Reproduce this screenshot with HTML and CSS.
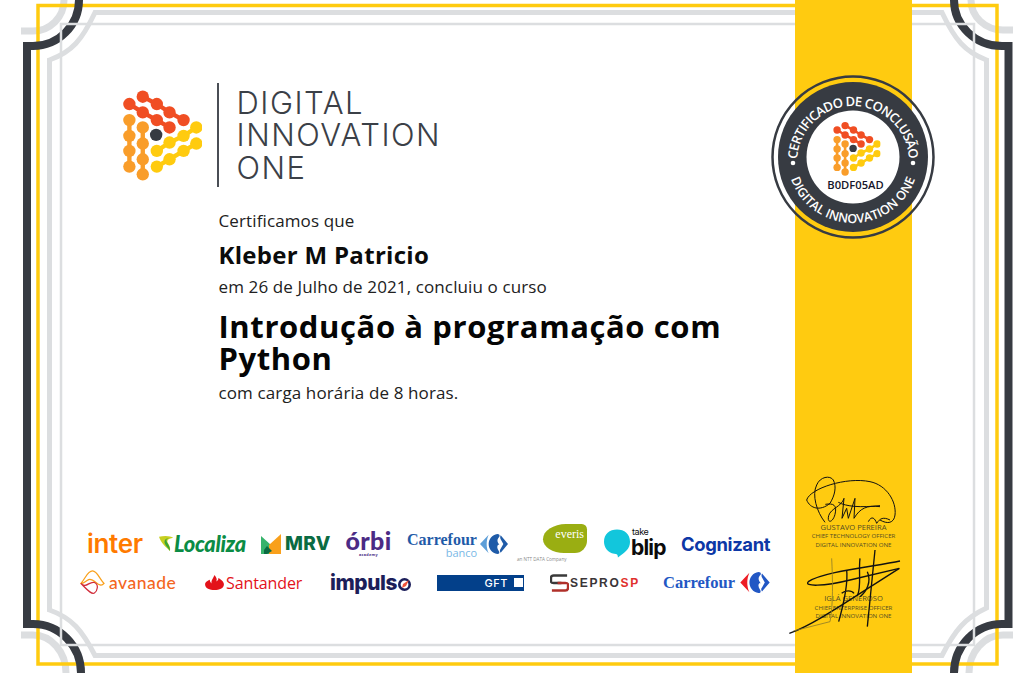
FILE: index.html
```html
<!DOCTYPE html>
<html lang="pt-BR">
<head>
<meta charset="utf-8">
<title>Certificado de Conclusão</title>
<link rel="stylesheet" href="styles.css">
</head>
<body>
<svg class="sprites" width="0" height="0" aria-hidden="true">
  <defs>
    <symbol id="dio-mark" viewBox="60 55 245 275">
      <g fill="none" stroke-width="13">
        <path class="m-red" d="M88 100L128 125L170 148L208 170M128 78L170 100L208 125L250 148"/>
        <path class="m-orange" d="M88 148V287M128 170V310"/>
        <path class="m-yellow" d="M170 240L208 215L250 195L288 170M170 287L208 265L250 240L288 218"/>
      </g>
      <g class="m-red-dots">
        <circle cx="88" cy="100" r="18.5"/><circle cx="128" cy="78" r="18.5"/><circle cx="170" cy="100" r="18.5"/><circle cx="208" cy="125" r="18.5"/><circle cx="250" cy="148" r="18.5"/><circle cx="128" cy="125" r="18.5"/><circle cx="170" cy="148" r="18.5"/><circle cx="208" cy="170" r="18.5"/>
      </g>
      <g class="m-orange-dots">
        <circle cx="88" cy="148" r="18.5"/><circle cx="88" cy="195" r="18.5"/><circle cx="88" cy="240" r="18.5"/><circle cx="88" cy="287" r="18.5"/><circle cx="128" cy="170" r="18.5"/><circle cx="128" cy="218" r="18.5"/><circle cx="128" cy="265" r="18.5"/><circle cx="128" cy="310" r="18.5"/>
      </g>
      <g class="m-yellow-dots">
        <circle cx="170" cy="240" r="18.5"/><circle cx="208" cy="215" r="18.5"/><circle cx="250" cy="195" r="18.5"/><circle cx="288" cy="170" r="18.5"/><circle cx="170" cy="287" r="18.5"/><circle cx="208" cy="265" r="18.5"/><circle cx="250" cy="240" r="18.5"/><circle cx="288" cy="218" r="18.5"/>
      </g>
      <circle class="m-dark" cx="168" cy="192" r="18.5"/>
    </symbol>
    <symbol id="carrefour-c" viewBox="0 0 42 30">
      <path class="cf-left" d="M13 1L0 15L13 29C9 20 9 10 13 1Z"/>
      <path class="cf-blue" d="M26 0C18 1 13 8 13 15C13 22 18 29 26 30C29 30 30 28 28 25C26 22 25 19 27 16H29L27 13C25 9 27 6 29 4C30 2 29 0 26 0ZM31 2L42 15L31 28C29 25 30 23 31 22L35 15L31 8C30 6 30 4 31 2Z"/>
    </symbol>
  </defs>
</svg>

<main class="certificate">
  <svg class="frame" viewBox="0 0 1033 673" aria-hidden="true">
    <g class="frame-arc">
      <path d="M21 31H33A31 31 0 0 0 64 0"/>
      <path d="M21 635H33A33 38 0 0 1 66 673"/>
      <path d="M1013 30H1003A32 30 0 0 1 971 0"/>
      <path d="M1013 635H1003A34 38 0 0 0 969 673"/>
    </g>
    <rect class="frame-gold" x="38" y="5.5" width="959" height="658.5"/>
    <path class="frame-thick" d="M95 12.5H942C955 40 965 52 986.5 60V608C965 618 955 630 942 655.5H95C82 630 72 618 49.5 610V60C72 52 82 40 95 12.5Z"/>
    <g class="frame-dark">
      <path d="M79 0A46 46 0 0 1 33 46H27V624H33A48 49 0 0 1 81 673"/>
      <path d="M954 0A48 46 0 0 0 1002 46H1008.5V624H1002A48 49 0 0 0 954 673"/>
    </g>
    <rect class="frame-thin" x="61" y="24" width="913" height="621"/>
  </svg>

  <aside class="band">
    <div class="signatory signatory-first">
      <p class="sign-name">GUSTAVO PEREIRA</p>
      <p>CHIEF TECHNOLOGY OFFICER</p>
      <p>DIGITAL INNOVATION ONE</p>
    </div>
    <div class="signatory signatory-second">
      <p class="sign-name">IGLÁ GENEROSO</p>
      <p>CHIEF ENTERPRISE OFFICER</p>
      <p>DIGITAL INNOVATION ONE</p>
    </div>
  </aside>

  <svg class="signatures" viewBox="0 0 420 525" aria-hidden="true">
    <g class="ink-thin">
      <path d="M80 105C90 70 200 35 270 50C320 60 350 110 345 150C342 175 322 178 300 165"/>
      <path d="M135 172C110 140 95 90 110 60C120 35 150 30 160 45C170 65 165 90 150 115C120 140 90 130 80 105"/>
      <path d="M136 118C160 114 172 120 165 148C158 175 140 175 146 152C152 130 185 125 192 100L186 160L200 130L205 160L225 100L222 160C240 130 260 120 300 125M175 112C200 125 240 128 300 122M265 170C275 150 285 160 290 175C300 160 310 155 330 165"/>
    </g>
    <g class="ink-bold">
      <path d="M360 288C280 305 130 320 85 350C70 365 130 365 210 345L358 310"/>
      <path d="M28 505C100 480 200 410 358 310"/>
      <path d="M285 255L262 485"/>
      <path d="M240 280C235 320 245 370 232 392M262 320C275 350 260 380 240 395"/>
      <path d="M200 315C205 360 190 420 176 470M185 385C195 375 215 375 222 385"/>
    </g>
    <path class="ink-faint" d="M155 280C158 340 160 420 150 470L40 498"/>
  </svg>

  <svg class="badge" viewBox="0 0 170 170" role="img" aria-label="Certificado de conclusão">
    <circle class="badge-ring" cx="85" cy="85" r="80.5"/>
    <circle class="badge-disc" cx="85" cy="85" r="75"/>
    <circle class="badge-core" cx="85" cy="85" r="46.5"/>
    <defs>
      <path id="badge-top" d="M29 90A56 56 0 0 1 141 90"/>
      <path id="badge-bottom" d="M19 85A66 66 0 0 0 151 85"/>
    </defs>
    <text class="badge-text badge-text-top"><textPath href="#badge-top" startOffset="50%" text-anchor="middle" textLength="170">CERTIFICADO DE CONCLUSÃO</textPath></text>
    <text class="badge-text"><textPath href="#badge-bottom" startOffset="50%" text-anchor="middle" textLength="162">DIGITAL INNOVATION ONE</textPath></text>
    <circle class="badge-dot" cx="25" cy="91" r="2.3"/>
    <circle class="badge-dot" cx="145" cy="91" r="2.3"/>
    <use href="#dio-mark" x="63.5" y="49" width="49" height="55"/>
    <text class="badge-code" x="87.5" y="117">B0DF05AD</text>
  </svg>

  <div class="content">
    <header class="brand">
      <svg class="brand-mark" aria-hidden="true"><use href="#dio-mark"/></svg>
      <div class="brand-rule"></div>
      <div class="brand-name">DIGITAL<br>INNOVATION<br>ONE</div>
    </header>

    <section class="statement">
      <p class="line">Certificamos que</p>
      <h2 class="student">Kleber M Patricio</h2>
      <p class="line">em 26 de Julho de 2021, concluiu o curso</p>
      <h1 class="course">Introdução à programação com Python</h1>
      <p class="line">com carga horária de 8 horas.</p>
    </section>

    <section class="partners">
      <div class="partner-row row-one">
        <div class="lg lg-inter">inter</div>
        <div class="lg lg-localiza">
          <svg class="swoosh" viewBox="0 0 18 20" aria-hidden="true"><path class="sw-a" d="M0 2C7 0 14 1 17 3C10 4 9 7 11 10C13 13 14 16 13 19C8 14 2 9 0 2Z"/><path class="sw-b" d="M13 19C14 14 10 10 9 7C8.5 5 10 4 12 3.5C7 4 6 7 7 10C8 13 11 15 13 19Z"/></svg>
          <span>Localiza</span>
        </div>
        <div class="lg lg-mrv">
          <svg class="mrv-mark" viewBox="0 0 20 20" aria-hidden="true"><path class="mv-a" d="M0 2L10 11V20H0Z"/><path class="mv-b" d="M20 0V20H8V11Z"/><path class="mv-c" d="M6 12L11 17L6 20H3V16Z"/></svg>
          <span>MRV</span>
        </div>
        <div class="lg lg-orbi"><span class="orbi-word">órbi</span><span class="orbi-sub">academy</span></div>
        <div class="lg lg-cfb">
          <div class="cfb-text"><span class="cf-word">Carrefour</span><span class="cfb-sub">banco</span></div>
          <svg class="cf-mark" aria-hidden="true"><use href="#carrefour-c"/></svg>
        </div>
        <div class="lg lg-everis">
          <span class="ntt">an NTT DATA Company</span>
          <div class="everis-blob">everis</div>
        </div>
        <div class="lg lg-blip">
          <svg class="bubble" viewBox="0 0 28 30" aria-hidden="true"><path d="M14 0C22 0 28 5 28 13C28 21 23 24 15 30C15 27 14 26 11 26C4 25 0 19 0 13C0 5 6 0 14 0Z"/></svg>
          <div class="blip-text"><span class="take">take</span><span class="blip">blip</span></div>
        </div>
        <div class="lg lg-cognizant">Cognizant</div>
      </div>
      <div class="partner-row row-two">
        <div class="lg lg-avanade">
          <svg class="ava-mark" viewBox="0 0 26 26" aria-hidden="true"><path class="av-a" d="M1 14C6 8 8 1 13 1C18 1 20 9 25 14C20 20 15 8 9 10C5 12 4 14 1 14Z"/><path class="av-b" d="M1 14C6 20 10 11 15 13C20 15 18 22 15 24C12 26 7 20 1 14Z"/></svg>
          <span>avanade</span>
        </div>
        <div class="lg lg-santander">
          <svg class="flame" viewBox="0 0 20 17" aria-hidden="true"><path d="M10 0C12 3 13 4 12 7C15 5 14 3 14 3C17 5 20 7 20 10C20 14 15 16 10 16C5 16 0 14 0 10C0 7 3 6 5 5C5 7 6 8 7 9C6 6 9 3 10 0Z"/></svg>
          <span>Santander</span>
        </div>
        <div class="lg lg-impulso">
          <span>impuls</span>
          <svg class="rocket" viewBox="0 0 15 15" aria-hidden="true"><circle class="rk-ring" cx="7.5" cy="7.5" r="5.2"/><path class="rk-flame" d="M12 3L9 9L5 11L6 7Z"/></svg>
        </div>
        <div class="lg lg-gft"><span>GFT</span><i class="gft-square"></i></div>
        <div class="lg lg-seprosp">
          <svg class="sep-mark" viewBox="0 0 20 20" aria-hidden="true"><path class="sp-a" d="M18 2H4C2 2 1 3 1 5V8C1 10 2 10 4 10H12"/><path class="sp-b" d="M2 18H16C18 18 19 17 19 15V12C19 10 18 10 16 10H8"/></svg>
          <span><b class="sep-dark">SEPRO</b><b class="sep-red">SP</b></span>
        </div>
        <div class="lg lg-carrefour">
          <span class="cf-word">Carrefour</span>
          <svg class="cf-mark" aria-hidden="true"><use href="#carrefour-c"/></svg>
        </div>
      </div>
    </section>
  </div>
</main>
</body>
</html>
```

FILE: styles.css
```css
html, body { margin: 0; padding: 0; background: #fff; }
body { width: 1033px; height: 673px; overflow: hidden; font-family: "Open Sans", "Liberation Sans", sans-serif; }
p, h1, h2 { margin: 0; }

.sprites { position: absolute; }
.m-red { stroke: #f04e23; }
.m-orange { stroke: #f99d2a; }
.m-yellow { stroke: #ffcb0f; }
.m-red-dots { fill: #f04e23; }
.m-orange-dots { fill: #f99d2a; }
.m-yellow-dots { fill: #ffcb0f; }
.m-dark { fill: #373b42; }

.certificate { position: relative; width: 1033px; height: 673px; overflow: hidden; background: #fff; }

.frame { position: absolute; inset: 0; width: 1033px; height: 673px; }
.frame path, .frame rect { fill: none; }
.frame-arc path { stroke: #dcdee0; stroke-width: 7; }
.frame-gold { stroke: #ffcb0f; stroke-width: 3.5; }
.frame-thick { stroke: #dcdee0; stroke-width: 5; }
.frame-dark path { stroke: #373b42; stroke-width: 8; }
.frame-thin { stroke: #dcdee0; stroke-width: 2.5; }

.band { position: absolute; left: 795px; top: 0; width: 117px; height: 673px; background: #ffcb10; box-sizing: border-box; padding-top: 521.5px; color: #554d24; text-align: center; font-size: 6.1px; line-height: 8.5px; }
.sign-name { font-size: 7.6px; line-height: 10.5px; }
.signatory-second { margin-top: 44px; }

.signatures { position: absolute; left: 780px; top: 465px; width: 140px; height: 175px; }
.signatures path { fill: none; stroke: #111; }
.ink-thin path { stroke-width: 3; }
.ink-bold path { stroke-width: 4; }
.signatures .ink-faint { stroke: #8a7a2a; stroke-width: 2.4; }

.badge { position: absolute; left: 768px; top: 72px; width: 170px; height: 170px; }
.badge-ring { fill: none; stroke: #373b42; stroke-width: 2.5; }
.badge-disc { fill: #373b42; }
.badge-core { fill: #fff; }
.badge-dot { fill: #fff; }
.badge-text { fill: #fff; font-family: "Open Sans", sans-serif; font-weight: 600; font-size: 12.6px; }
.badge-text-top { font-size: 13px; }
.badge-code { fill: #14142a; font-family: "Open Sans", sans-serif; font-weight: 600; font-size: 11.2px; text-anchor: middle; }

.content { position: relative; box-sizing: border-box; width: 1033px; height: 673px; padding-top: 83px; }

.brand { display: flex; align-items: center; height: 104px; margin-left: 120px; }
.brand-mark { width: 82px; height: 92px; }
.brand-rule { width: 1.5px; height: 104px; margin-left: 15px; background: #4a4e55; }
.brand-name { margin-left: 18px; padding-top: 1px; color: #3b4047; font-family: "Inter", sans-serif; font-weight: 300; font-size: 31px; line-height: 32.5px; letter-spacing: 1.5px; }

.statement { margin: 23px 0 0 218.5px; width: 530px; color: #212121; }
.line { font-size: 17px; line-height: 22px; letter-spacing: .12px; }
.student { margin: 7px 0 5px; color: #0b0b0b; font-size: 24px; line-height: 32px; font-weight: 700; letter-spacing: .3px; }
.course { margin: 12px 0 8px; color: #050505; font-size: 31px; line-height: 32px; font-weight: 700; letter-spacing: .6px; }

.partners { margin-top: 120px; }
.partner-row { display: grid; align-items: center; height: 39px; }
.row-one { margin-left: 87px; grid-template-columns: 72px 102px 84px 63px 109px 87px 77px 89px; }
.row-two { margin-left: 80px; grid-template-columns: 125px 125px 107px 113px 113px 108px; }
.lg { display: flex; align-items: center; white-space: nowrap; }

.lg-inter { color: #ff7a00; font-family: "Inter", sans-serif; font-weight: 600; font-size: 26px; letter-spacing: -.3px; }
.lg-localiza { gap: 0; color: #0b8c45; font-family: "Lato", sans-serif; font-style: italic; font-weight: 900; font-size: 21.8px; letter-spacing: -.3px; }
.swoosh { width: 15px; height: 19px; }
.sw-a { fill: #c7cf20; }
.sw-b { fill: #3aa535; }
.lg-mrv { gap: 4px; color: #0a6b42; font-family: "Inter", sans-serif; font-weight: 800; font-size: 19px; letter-spacing: .3px; }
.mrv-mark { width: 20px; height: 20px; }
.mv-a { fill: #37b36b; }
.mv-b { fill: #f9a01b; }
.mv-c { fill: #0a6b42; }
.lg-orbi { flex-direction: column; align-items: center; width: 47px; color: #4b2b85; margin-top: -3px; }
.orbi-word { font-family: "Lato", sans-serif; font-weight: 900; font-size: 25px; line-height: 24px; letter-spacing: .4px; }
.orbi-sub { font-size: 3.8px; line-height: 5px; font-weight: 700; letter-spacing: .3px; }
.lg-cfb { gap: 4px; }
.cfb-text { display: flex; flex-direction: column; align-items: center; width: 68px; margin-top: 2px; }
.cf-word { color: #1f5ba8; font-family: "Liberation Serif", serif; font-weight: 700; font-size: 16px; line-height: 15px; }
.cfb-sub { color: #7ab8e6; font-size: 11px; line-height: 11px; margin-left: 39px; }
.cf-mark { width: 28px; height: 20px; }
.cf-left { fill: var(--cf-left, #5d9ed8); }
.cf-blue { fill: var(--cf-blue, #1f5ba8); }
.lg-everis { position: relative; height: 39px; }
.ntt { position: absolute; left: 0; top: 32px; color: #8a8a8a; font-size: 4.6px; }
.everis-blob { position: absolute; left: 26px; top: 0; width: 44px; height: 29px; box-sizing: border-box; padding-top: 3px; background: #9aae12; border-radius: 60% 6px 14px 55%; color: #fff; font-family: "Liberation Serif", serif; font-size: 12px; text-align: right; padding-right: 3px; }
.lg-blip { gap: 1px; color: #0b0b0b; }
.bubble { width: 26px; height: 29px; fill: #12c6dc; }
.blip-text { display: flex; flex-direction: column; margin-top: -2px; }
.take { font-family: "Inter", sans-serif; font-size: 9px; line-height: 9px; letter-spacing: -.4px; margin-left: 1px; }
.blip { font-family: "Inter", sans-serif; font-weight: 700; font-size: 21px; line-height: 23px; letter-spacing: -.8px; }
.lg-cognizant { color: #0c37a6; font-family: "Inter", sans-serif; font-weight: 700; font-size: 18.4px; letter-spacing: -.35px; }

.lg-avanade { gap: 4px; color: #f4661e; font-family: "Lato", sans-serif; font-weight: 500; font-size: 17.5px; letter-spacing: .5px; }
.ava-mark { width: 25px; height: 25px; fill: none; }
.av-a { stroke: #f9a01b; stroke-width: 1.3; }
.av-b { stroke: #d12c3a; stroke-width: 1.3; }
.lg-santander { gap: 2px; color: #e3121a; font-family: "Open Sans", sans-serif; font-size: 16px; letter-spacing: -.1px; }
.flame { width: 19px; height: 16px; fill: #e3121a; }
.lg-impulso { color: #1c1e5a; font-family: "Inter", sans-serif; font-weight: 800; font-size: 20.8px; letter-spacing: -.4px; }
.rocket { width: 15px; height: 15px; margin-top: 3px; }
.rk-ring { fill: none; stroke: #1c1e5a; stroke-width: 2.6; }
.rk-flame { fill: #f0533a; }
.lg-gft { justify-content: flex-end; gap: 6px; width: 87px; height: 16px; box-sizing: border-box; padding-right: 1px; background: #03408a; color: #fff; font-family: "Inter", sans-serif; font-weight: 500; font-size: 11px; letter-spacing: .5px; }
.gft-square { width: 9px; height: 9px; background: #fff; }
.lg-seprosp { gap: 1px; font-family: "Liberation Sans", sans-serif; font-size: 12px; letter-spacing: 1.7px; }
.sep-mark { width: 19px; height: 20px; fill: none; stroke-width: 2.6; }
.sp-a { stroke: #3a3a3a; }
.sp-b { stroke: #b0302a; }
.sep-dark { color: #3a3538; font-weight: 700; }
.sep-red { color: #e0302c; font-weight: 700; }
.lg-carrefour { gap: 5px; --cf-left: #ed1c24; --cf-blue: #2257c4; }
.lg-carrefour .cf-word { color: #2257c4; font-size: 16.5px; }
.lg-carrefour .cf-mark { width: 30px; height: 21px; }
```
